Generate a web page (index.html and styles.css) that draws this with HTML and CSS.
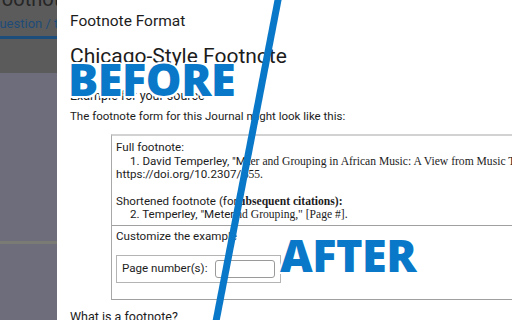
FILE: index.html
```html
<!DOCTYPE html>
<html>
	<head>
		<meta charset="utf-8">
		<title>Footnote Format</title>
		<link rel="stylesheet" href="styles.css">
	</head>
	<body>
		<div class="screen">
			<aside class="backdrop">
				<div class="site-head">
					<div class="site-title">Footnote Generator</div>
					<div class="crumb">Question / the footnote</div>
				</div>
				<div class="site-body"><div class="site-rule"></div></div>
			</aside>
			<section class="modal">
				<h2 class="modal-title">Footnote Format</h2>
				<h1 class="style-title">Chicago-Style Footnote</h1>
				<h4 class="sub">Example for your source</h4>
				<p class="lead">The footnote form for this Journal might look like this:</p>
				<div class="example">
					<div class="cite">
						<!-- after: citation set in serif -->
						<div class="cite-after">
							<p><b>Full footnote:</b></p>
							<p class="note">1. David Temperley, "Meter and Grouping in African Music: A View from Music Theory," <i>Ethnomusicology</i> 44, no. 1 (2000): 65,<br>https://doi.org/10.2307/852655.</p>
							<p>&nbsp;</p>
							<p><b>Shortened footnote (for subsequent citations):</b></p>
							<p class="note">2. Temperley, "Meter and Grouping," [Page #].</p>
						</div>
						<!-- before: same citation in the site font, cut at the line -->
						<div class="cite-before">
							<p>Full footnote:</p>
							<p class="note">1. David Temperley, "Meter and Grouping in African Music: A View from Music Theory,"<br>https://doi.org/10.2307/852655.</p>
							<p>&nbsp;</p>
							<p>Shortened footnote (for subsequent citations):</p>
							<p class="note">2. Temperley, "Meter and Grouping," [Page #].</p>
						</div>
					</div>
					<div class="customize">
						<p>Customize the example</p>
						<div class="field">
							<label for="pages">Page number(s):</label>
							<input id="pages" type="text">
						</div>
					</div>
				</div>
				<h4 class="sub sub-next">What is a footnote?</h4>
			</section>

			<svg class="slash" width="512" height="320" viewBox="0 0 512 320">
				<line x1="279" y1="-5" x2="215.3" y2="325" stroke="#0a78c8" stroke-width="7"/>
			</svg>
			<div class="tag tag-before">BEFORE</div>
			<div class="tag tag-after">AFTER</div>
		</div>
	</body>
</html>
```
FILE: styles.css
```css
body,p,h1,h2,h4{
	margin: 0;
	padding: 0;
}
body{
	font-family: Roboto, "Liberation Sans", sans-serif;
	color: #1c1c1c;
	background: #fff;
}
.screen{
	position: relative;
	display: flex;
	width: 512px;
	height: 320px;
	overflow: hidden;
}

/* page behind the dialog, dimmed */
.backdrop{
	flex: none;
	width: 57px;
	display: flex;
	flex-direction: column;
	overflow: hidden;
	white-space: nowrap;
}
.site-head{
	height: 73px;
	background: #5b5b5c;
}
.site-title{
	margin-top: -11px;
	margin-left: -9px;
	font-size: 20px;
	line-height: 20px;
	color: #262626;
}
.crumb{
	margin-top: 6.5px;
	padding-bottom: 4.5px;
	font-size: 13px;
	line-height: 16px;
	color: #1e4c78;
	text-indent: -9.5px;
	border-bottom: 3px solid #1d4d7a;
}
.site-body{
	flex: 1;
	background: #6d6d7b;
}
.site-rule{
	margin-top: 168px;
	height: 3px;
	background: #7b7b76;
}

/* dialog */
.modal{
	flex: none;
	width: 640px;
	padding: 11px 0 0 13px;
	background: #fff;
}
.modal-title{
	font-size: 15.5px;
	line-height: 20px;
	font-weight: 400;
}
.style-title{
	margin-top: 12px;
	font-size: 21px;
	line-height: 26px;
	font-weight: 400;
}
.sub{
	margin-top: 19.4px;
	font-size: 12.5px;
	line-height: 16px;
	font-weight: 400;
}
.sub-next{
	margin-top: 9.3px;
}
.lead{
	margin-top: 4.2px;
	font-size: 11.5px;
	line-height: 15px;
}
.example{
	margin: 10.4px 0 0 41px;
	border-top: 2px solid #d2d2d2;
	border-left: 1px solid #a8a8a8;
	border-bottom: 1px solid #a0a0a0;
	font-size: 11.6px;
	line-height: 13.4px;
}
.cite{
	display: grid;
	padding: 5.3px 0 3.3px 4px;
	white-space: nowrap;
}
.cite-after,
.cite-before{
	grid-area: 1 / 1;
}
.cite-after{
	font-family: "Liberation Serif", serif;
}
.cite-before{
	background: #fff;
	clip-path: polygon(-20px -20px, 138.6px -20px, 115.4px 100px, -20px 100px);
}
.note{
	text-indent: 14px;
}
.customize{
	padding: 4.3px 0 16px 4px;
	border-top: 1px solid #a0a0a0;
}
.field{
	display: flex;
	align-items: center;
	gap: 9px;
	width: fit-content;
	margin-top: 11.3px;
	padding: 4px 5px;
	border: 1px solid #b4b4b4;
	white-space: nowrap;
}
.field label{
	flex: none;
	width: 84px;
}
.field input{
	flex: none;
	box-sizing: border-box;
	width: 60px;
	height: 18px;
	padding: 0;
	border: 1px solid #9a9a9a;
	border-radius: 3px;
}

/* before / after overlay */
.slash{
	position: absolute;
	left: 0;
	top: 0;
	pointer-events: none;
}
.tag{
	position: absolute;
	font-family: "Open Sans", "DejaVu Sans", sans-serif;
	font-weight: 800;
	font-size: 45px;
	line-height: 1;
	letter-spacing: -0.5px;
	color: #0a78c8;
	text-shadow: 2px 0 0 #fff, -2px 0 0 #fff, 0 2px 0 #fff, 0 -2px 0 #fff,
		1.5px 1.5px 0 #fff, -1.5px 1.5px 0 #fff, 1.5px -1.5px 0 #fff, -1.5px -1.5px 0 #fff;
}
.tag-before{
	left: 68px;
	top: 56px;
}
.tag-after{
	left: 280px;
	top: 232px;
}
```
